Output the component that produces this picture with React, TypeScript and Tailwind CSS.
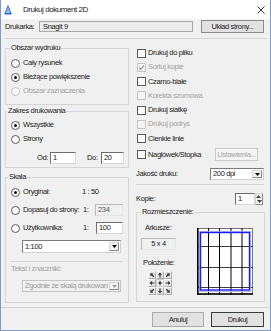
import React from 'react';

const Radio = ({ checked = false, disabled = false }: { checked?: boolean; disabled?: boolean }) => (
  <span
    className={`w-[9px] h-[9px] shrink-0 rounded-full border flex items-center justify-center ${
      disabled ? 'border-[#c4c4c4] bg-[#f7f7f7]' : 'border-[#5a5a5a] bg-white'
    }`}
  >
    {checked && <span className="w-[3px] h-[3px] rounded-full bg-[#111]" />}
  </span>
);

const Check = ({ checked = false, disabled = false }: { checked?: boolean; disabled?: boolean }) => (
  <span
    className={`w-[9px] h-[9px] shrink-0 border flex items-center justify-center ${
      disabled ? 'border-[#c4c4c4] bg-[#f4f4f4]' : 'border-[#5a5a5a] bg-white'
    }`}
  >
    {checked && (
      <svg width="7" height="7" viewBox="0 0 7 7">
        <path d="M1 3.5L2.8 5.3L6 1.5" fill="none" stroke={disabled ? '#a0a0a0' : '#111'} strokeWidth="1.3" />
      </svg>
    )}
  </span>
);

const Caret = ({ color = '#000' }: { color?: string }) => (
  <svg width="5" height="3" viewBox="0 0 5 3">
    <path d="M0 0H5L2.5 3Z" fill={color} />
  </svg>
);

const Combo = ({ value, disabled = false, className }: { value: string; disabled?: boolean; className: string }) => (
  <div
    className={`flex border ${disabled ? 'border-[#c4c4c4] bg-[#f0f0f0] text-[#9a9a9a]' : 'border-[#7a7a7a] border-b-[#d0d0d0] border-r-[#d0d0d0] bg-white'} ${className}`}
  >
    <span className="flex-1 pl-[2px] flex items-center overflow-hidden whitespace-nowrap">{value}</span>
    <span className="w-[10px] m-[1px] bg-[#f0f0f0] border border-[#d8d8d8] border-r-[#8a8a8a] border-b-[#8a8a8a] flex items-center justify-center">
      <Caret color={disabled ? '#a0a0a0' : '#000'} />
    </span>
  </div>
);

const Field = ({ value, disabled = false, className }: { value: string; disabled?: boolean; className: string }) => (
  <div
    className={`border flex items-center pl-[2px] ${
      disabled
        ? 'border-[#b9b9b9] border-b-[#e4e4e4] border-r-[#e4e4e4] bg-[#f0f0f0] text-[#555]'
        : 'border-[#6d6d6d] border-b-[#d6d6d6] border-r-[#d6d6d6] bg-white'
    } ${className}`}
  >
    {value}
  </div>
);

const Group = ({ title, titleLeft, className, children }: { title: string; titleLeft: string; className: string; children: React.ReactNode }) => (
  <div className={`relative border border-[#d5d5d5] ${className}`}>
    <span className={`absolute -top-[6px] ${titleLeft} bg-[#f0f0f0] px-[1px] leading-[10px]`}>{title}</span>
    {children}
  </div>
);

const Arrow = ({ angle }: { angle: number }) => (
  <span className="w-[8px] h-[8px] bg-[#e4e4e4] border border-[#f8f8f8] border-r-[#b0b0b0] border-b-[#b0b0b0] flex items-center justify-center">
    <svg width="6" height="6" viewBox="0 0 6 6">
      <path d="M3 0.5L5 3H3.6V5.5H2.4V3H1Z" fill="#333" transform={`rotate(${angle} 3 3)`} />
    </svg>
  </span>
);

const checks = [
  { label: 'Drukuj do pliku' },
  { label: 'Sortuj kopie', checked: true, disabled: true },
  { label: 'Czarno-białe' },
  { label: 'Korekta szumowa', disabled: true },
  { label: 'Drukuj siatkę' },
  { label: 'Drukuj podrys', disabled: true },
  { label: 'Cienkie linie' },
];

export default function App() {
  return (
    <div className="w-[271px] h-[331px] bg-[#f0f0f0] border-l border-r border-b border-[#7d9cc0] flex flex-col text-[7.5px] tracking-[-0.35px] leading-[10px] text-[#1a1a1a] font-['Liberation_Sans',Arial,sans-serif] overflow-hidden">
      {/* title bar */}
      <div className="h-[19px] bg-white flex items-center pl-[3px] pr-[5px] shrink-0">
        <svg width="8" height="11" viewBox="0 0 8 11">
          <path d="M4 0.5L7.8 10.5H0.2Z" fill="#2f6fd6" />
          <path d="M4 3L6 9H2Z" fill="#9cc3f5" />
        </svg>
        <span className="ml-[11px] text-[8px] tracking-[-0.45px] leading-[11px]">Drukuj dokument 2D</span>
        <svg className="ml-auto" width="8" height="8" viewBox="0 0 8 8">
          <path d="M0.5 0.5L7.5 7.5M7.5 0.5L0.5 7.5" stroke="#222" strokeWidth="0.9" />
        </svg>
      </div>

      {/* printer row */}
      <div className="mt-[1px] pl-[4px] h-[13px] flex items-center">
        <span className="w-[34px]">Drukarka:</span>
        <div className="w-[154px] h-[11px] border border-[#a8a8a8] bg-[#ececec] flex items-center pl-[3px]">Snagit 9</div>
        <button className="ml-[8px] w-[63px] h-[13px] border border-[#8c8c8c] bg-[#e1e1e1] flex items-center justify-center">
          Układ strony...
        </button>
      </div>
      <div className="mt-[5px] ml-[4px] w-[262px] h-px bg-[#d4d4d4]" />

      {/* body */}
      <div className="flex pl-[4px]">
        {/* left column */}
        <div className="w-[124px] flex flex-col">
          <Group title="Obszar wydruku" titleLeft="left-[4px]" className="mt-[9px] pt-[7px] pb-[6px]">
            <div className="h-[14px] flex items-center pl-[5px]">
              <Radio />
              <span className="ml-[3px]">Cały rysunek</span>
            </div>
            <div className="h-[14px] flex items-center pl-[5px]">
              <Radio checked />
              <span className="ml-[3px]">Bieżące powiększenie</span>
            </div>
            <div className="h-[14px] flex items-center pl-[5px] text-[#a3a3a3]">
              <Radio disabled />
              <span className="ml-[3px]">Obszar zaznaczenia</span>
            </div>
          </Group>

          <Group title="Zakres drukowania" titleLeft="left-[1px]" className="mt-[6px] pt-[6px] pb-[3px]">
            <div className="h-[14px] flex items-center pl-[5px]">
              <Radio checked />
              <span className="ml-[3px]">Wszystkie</span>
            </div>
            <div className="h-[14px] flex items-center pl-[5px]">
              <Radio />
              <span className="ml-[3px]">Strony</span>
            </div>
            <div className="mt-[6px] h-[12px] flex items-center pl-[31px]">
              <span className="w-[13px]">Od:</span>
              <Field value="1" className="w-[26px] h-[12px]" />
              <span className="ml-[11px] w-[14px]">Do:</span>
              <Field value="20" className="w-[23px] h-[12px]" />
            </div>
          </Group>

          <Group title="Skala" titleLeft="left-[2px]" className="mt-[9px] pt-[7px] pb-[10px]">
            <div className="h-[14px] flex items-center pl-[5px]">
              <Radio checked />
              <span className="ml-[3px] w-[59px]">Oryginał:</span>
              <span>1 : 50</span>
            </div>
            <div className="mt-[4px] h-[14px] flex items-center pl-[5px]">
              <Radio />
              <span className="ml-[3px] w-[60px] whitespace-nowrap">Dopasuj do strony:</span>
              <span className="w-[12px]">1:</span>
              <Field value="234" disabled className="w-[28px] h-[12px]" />
            </div>
            <div className="mt-[4px] h-[14px] flex items-center pl-[5px]">
              <Radio />
              <span className="ml-[3px] w-[60px]">Użytkownika:</span>
              <span className="w-[13px]">1:</span>
              <Field value="100" className="w-[27px] h-[12px]" />
            </div>
            <Combo value="1:100" className="mt-[5px] ml-[16px] w-[99px] h-[13px]" />
            <div className="mt-[8px] mx-[5px] h-px bg-[#d4d4d4]" />
            <div className="mt-[2px] pl-[5px] text-[#a3a3a3]">Tekst i znaczniki:</div>
            <Combo value="Zgodnie ze skalą drukowania" disabled className="mt-[6px] ml-[16px] w-[99px] h-[12px]" />
          </Group>
        </div>

        {/* right column */}
        <div className="ml-[7px] w-[129px] flex flex-col pt-[7px]">
          {checks.map((c) => (
            <div key={c.label} className={`h-[14.25px] flex items-center ${c.disabled ? 'text-[#a3a3a3]' : ''}`}>
              <span className="ml-[1px]">
                <Check checked={c.checked} disabled={c.disabled} />
              </span>
              <span className="ml-[2px]">{c.label}</span>
            </div>
          ))}
          <div className="mt-[2.25px] h-[13px] flex items-center">
            <span className="ml-[1px]">
              <Check />
            </span>
            <span className="ml-[2px]">Nagłówek/Stopka</span>
            <button className="ml-auto mr-[7px] w-[43px] h-[13px] border border-[#cbcbcb] bg-[#f4f4f4] text-[#a3a3a3] flex items-center justify-center">
              Ustawienia...
            </button>
          </div>
          <div className="mt-[7px] h-[12px] flex items-center">
            <span>Jakość druku:</span>
            <Combo value="200 dpi" className="ml-auto mr-[1px] w-[54px] h-[12px]" />
          </div>
          <div className="mt-[4px] w-[128px] h-px bg-[#d4d4d4]" />
          <div className="mt-[8px] h-[12px] flex items-center">
            <span>Kopie:</span>
            <div className="ml-auto mr-[2px] flex h-[12px]">
              <Field value="1" className="w-[20px] h-[12px]" />
              <div className="w-[8px] flex flex-col bg-[#f0f0f0] border border-[#d8d8d8] border-r-[#8a8a8a] border-b-[#8a8a8a]">
                <span className="flex-1 flex items-center justify-center rotate-180">
                  <Caret color="#444" />
                </span>
                <span className="flex-1 flex items-center justify-center">
                  <Caret color="#444" />
                </span>
              </div>
            </div>
          </div>

          <Group title="Rozmieszczenie:" titleLeft="left-[4px]" className="mt-[7px] h-[90px] flex">
            <div className="w-[60px] flex flex-col">
              <span className="mt-[10px] ml-[8px]">Arkusze:</span>
              <div className="mt-[5px] ml-[4px] w-[35px] h-[12px] border border-[#b9b9b9] border-b-[#e6e6e6] border-r-[#e6e6e6] flex items-center justify-center">
                5 x 4
              </div>
              <span className="mt-[8px] ml-[6px]">Położenie:</span>
              <div className="mt-[3px] ml-[11px] grid grid-cols-3 w-[24px]">
                <Arrow angle={-45} />
                <Arrow angle={0} />
                <Arrow angle={45} />
                <Arrow angle={-90} />
                <span className="w-[8px] h-[8px] bg-white border border-[#c8c8c8] flex items-center justify-center">
                  <svg width="6" height="6" viewBox="0 0 6 6">
                    <path d="M3 0.8V5.2M0.8 3H5.2" stroke="#222" strokeWidth="1.2" />
                  </svg>
                </span>
                <Arrow angle={90} />
                <Arrow angle={-135} />
                <Arrow angle={180} />
                <Arrow angle={135} />
              </div>
            </div>
            <svg className="mt-[15px]" width="56" height="67" viewBox="0 0 56 67">
              <rect x="0.5" y="0.5" width="55" height="65.5" fill="#fff" stroke="#777" />
              {[18.5, 39.5, 59.5].map((y) => (
                <line key={y} x1="0" x2="56" y1={y} y2={y} stroke="#3c3c3c" />
              ))}
              {[11.5, 22.5, 34, 45].map((x) => (
                <line key={x} x1={x} x2={x} y1="0" y2="67" stroke="#000" />
              ))}
              <rect x="2.5" y="3.5" width="51" height="60" fill="none" stroke="#b9b9e6" />
              <rect x="3.5" y="4.5" width="49" height="57.5" fill="none" stroke="#1a1aff" strokeWidth="1.4" />
              <line x1="0.8" x2="0.8" y1="0" y2="67" stroke="#000" strokeWidth="1.6" />
              <line x1="0" x2="56" y1="66" y2="66" stroke="#000" strokeWidth="1.6" />
            </svg>
          </Group>
        </div>
      </div>

      {/* footer */}
      <div className="mt-[4px] w-full h-px bg-[#d4d4d4]" />
      <div className="mt-[4px] flex justify-end gap-[7px] pr-[6px]">
        <button className="w-[52px] h-[15px] border border-[#adadad] bg-[#e1e1e1] flex items-center justify-center">Anuluj</button>
        <button className="w-[53px] h-[15px] border border-[#3c3c3c] bg-[#e1e1e1] flex items-center justify-center">Drukuj</button>
      </div>
    </div>
  );
}
